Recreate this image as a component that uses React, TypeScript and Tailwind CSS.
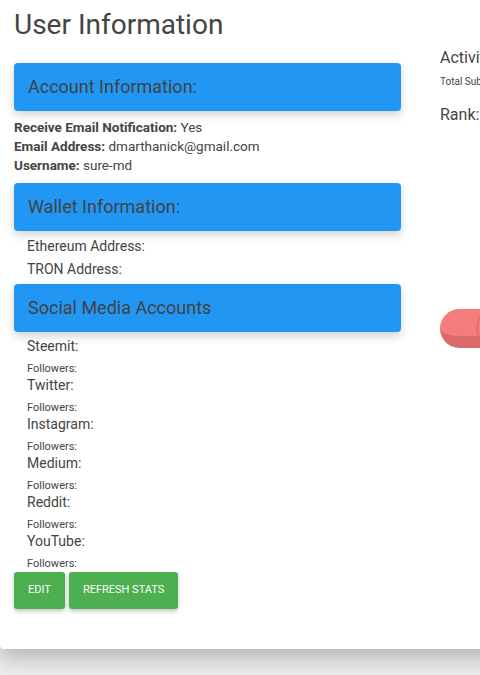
import React from "react";

const socials = ["Steemit", "Twitter", "Instagram", "Medium", "Reddit", "YouTube"];

function SectionHeader({ title }: { title: string }) {
  return (
    <div className="flex h-12 items-center rounded bg-[#2196f3] px-[14px] text-[18px] text-[#424242] shadow-[0_4px_10px_rgba(0,0,0,0.18)]">
      {title}
    </div>
  );
}

export default function App() {
  return (
    <div className="h-[675px] w-[480px] overflow-hidden bg-[#ececec] font-['Roboto',sans-serif] text-[#444]">
      <div className="flex w-[560px] rounded-bl bg-white pb-10 shadow-[0_8px_22px_rgba(0,0,0,0.25)]">
        {/* left column */}
        <div className="ml-[14px] w-[387px] shrink-0">
          <h1 className="pt-2 text-[28px] leading-[1.2]">User Information</h1>

          <div className="mt-[21px]">
            <SectionHeader title="Account Information:" />
          </div>
          <div className="mt-[7px] text-[13.5px] leading-[19px]">
            <p>
              <span className="font-bold">Receive Email Notification:</span> Yes
            </p>
            <p>
              <span className="font-bold">Email Address:</span> dmarthanick@gmail.com
            </p>
            <p>
              <span className="font-bold">Username:</span> sure-md
            </p>
          </div>

          <div className="mt-2">
            <SectionHeader title="Wallet Information:" />
          </div>
          <div className="mt-1 pl-[13px] text-[14px] leading-[23px]">
            <p>Ethereum Address:</p>
            <p>TRON Address:</p>
          </div>

          <div className="mt-[3px]">
            <SectionHeader title="Social Media Accounts" />
          </div>
          <ul className="mt-1 pl-[13px]">
            {socials.map((s) => (
              <li key={s}>
                <p className="text-[14px] leading-5">{s}:</p>
                <p className="mt-[7px] text-[11px] leading-3">Followers:</p>
              </li>
            ))}
          </ul>

          <div className="mt-[2px] flex gap-1">
            <button className="h-[37px] rounded-[3px] bg-[#4caf50] px-[14px] text-[11px] text-white shadow-[0_2px_4px_rgba(0,0,0,0.25)]">
              EDIT
            </button>
            <button className="h-[37px] rounded-[3px] bg-[#4caf50] px-[14px] text-[11px] text-white shadow-[0_2px_4px_rgba(0,0,0,0.25)]">
              REFRESH STATS
            </button>
          </div>
        </div>

        {/* right column */}
        <div className="ml-[39px] w-[100px] shrink-0 overflow-hidden pt-12">
          <p className="whitespace-nowrap text-[16px] leading-5">Activity</p>
          <p className="mt-[7px] whitespace-nowrap text-[10px] leading-[14px]">Total Submissions</p>
          <p className="mt-4 whitespace-nowrap text-[16px] leading-5">Rank:</p>
          <div className="relative mt-[184px] h-[39px] w-[120px] overflow-hidden rounded-l-full border-b-[12px] border-[#d96a6a] bg-[#f47c7c]">
            <div className="absolute left-[36px] top-0 h-[39px] w-[30px] rounded-l-full border-l-2 border-[#e06d6d]" />
          </div>
        </div>
      </div>
    </div>
  );
}
